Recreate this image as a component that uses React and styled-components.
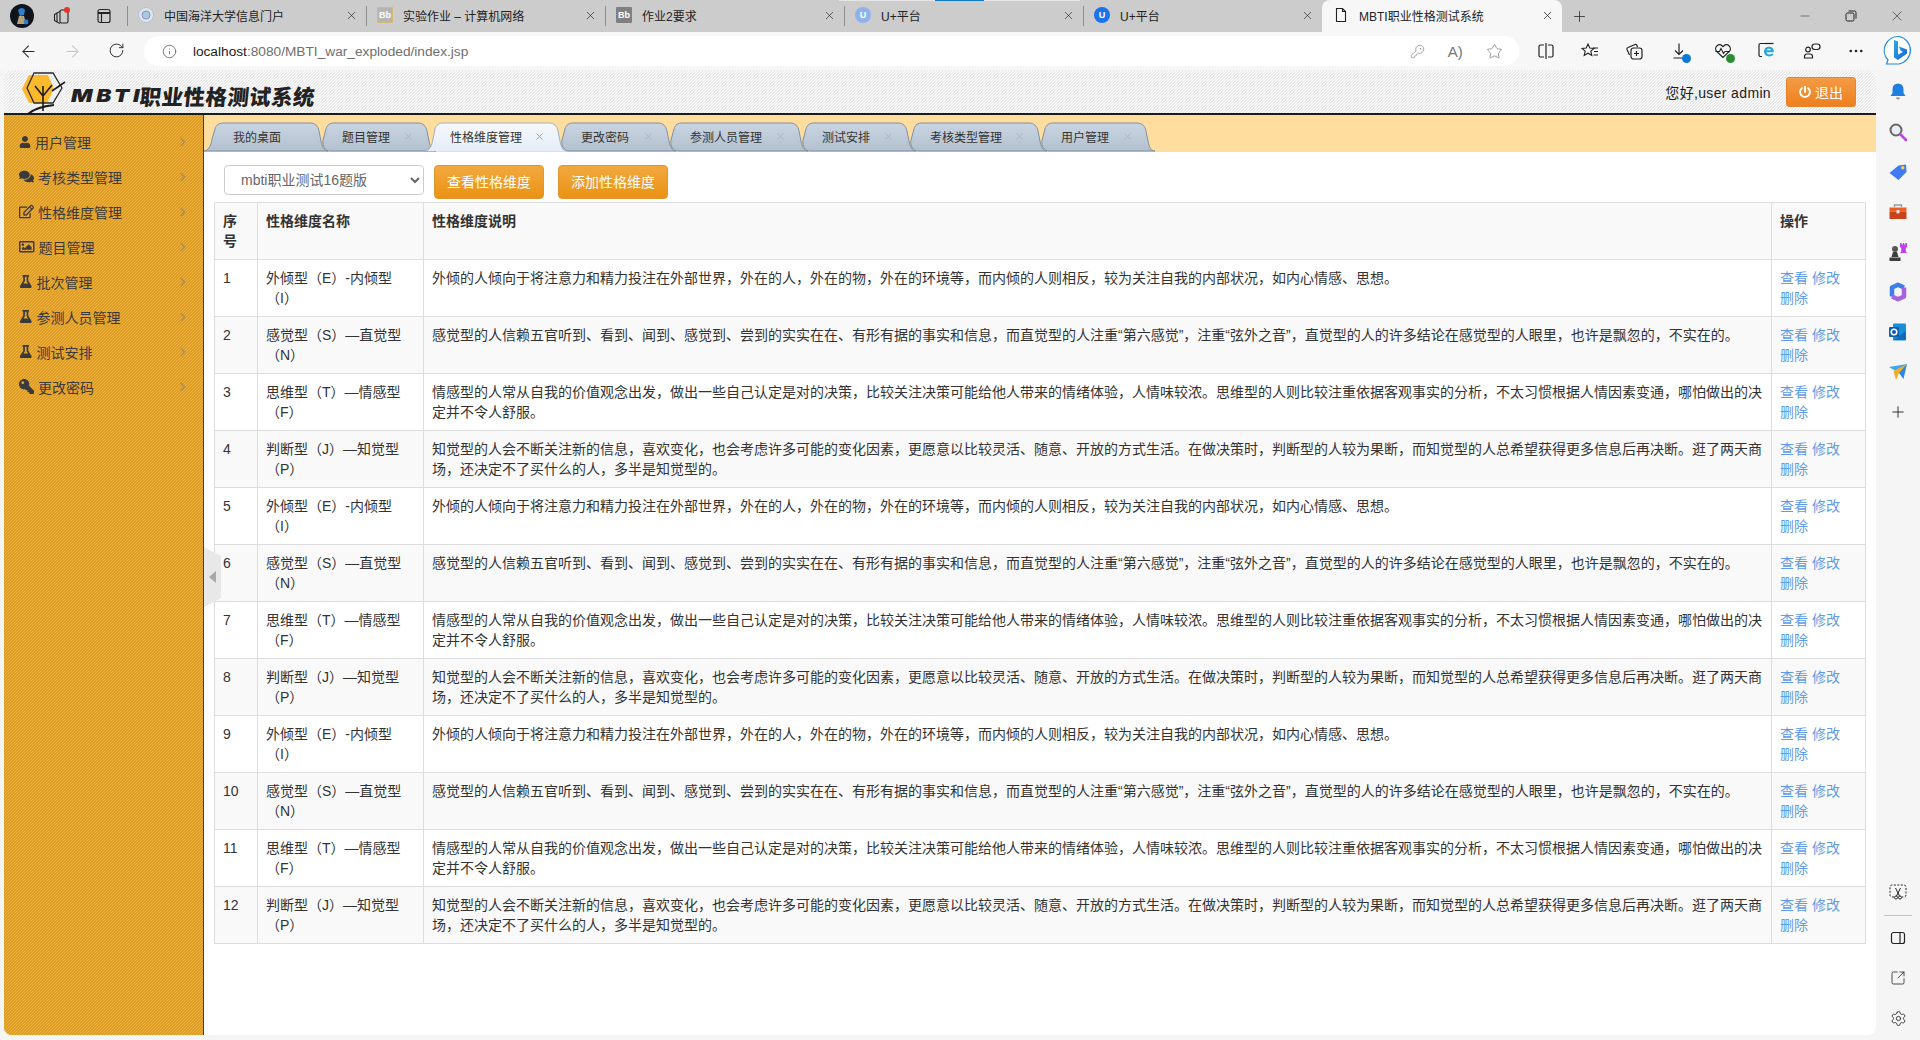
import React from "react";
import styled, { createGlobalStyle } from "styled-components";
import {
  ArrowLeft,
  ArrowRight,
  RotateCw,
  Info,
  KeyRound,
  Star,
  Plus,
  Minus,
  X,
  MoreHorizontal,
  Settings,
  SquareArrowOutUpRight,
} from "lucide-react";
import {
  FaUser,
  FaComments,
  FaRegEdit,
  FaRegImage,
  FaFlask,
  FaKey,
  FaChevronRight,
  FaPowerOff,
} from "react-icons/fa";

const FONT = `"Liberation Sans", "Noto Sans CJK SC", sans-serif`;

const GlobalStyle = createGlobalStyle`
  html, body {
    margin: 0;
    padding: 0;
    overflow: hidden;
    background: #f5f5f5;
  }
  * {
    box-sizing: border-box;
  }
`;

const hatch = (a, b) => `
  background-color: ${a};
  background-image: linear-gradient(135deg, ${b} 25%, ${a} 25%, ${a} 50%, ${b} 50%, ${b} 75%, ${a} 75%);
  background-size: 3px 3px;
`;

const Window = styled.div`
  width: 1920px;
  height: 1040px;
  display: flex;
  flex-direction: column;
  overflow: hidden;
  background: #f5f5f5;
  font-family: ${FONT};
  font-size: 14px;
  color: #333;
`;

/* browser tab strip */
const TabBar = styled.div`
  height: 32px;
  display: flex;
  align-items: stretch;
  background: #cccccc;
  flex: none;
`;

const TabBarLeft = styled.div`
  width: 127px;
  display: flex;
  align-items: center;
  padding-left: 10px;
`;

const TabBarIcon = styled.div`
  width: 20px;
  height: 20px;
  display: flex;
  align-items: center;
  justify-content: center;
  margin-left: ${(p) => p.$left}px;
`;

const BrowserTab = styled.div`
  position: relative;
  width: ${(p) => (p.$active ? 240 : 239)}px;
  display: flex;
  align-items: center;
  gap: 10px;
  padding: 0 8px 2px 11px;
  font-size: 12px;
  color: #222;
  background: ${(p) => (p.$active ? "#f7f7f7" : "transparent")};
  border-radius: ${(p) => (p.$active ? "8px 8px 0 0" : "0")};

  &::before {
    content: "";
    display: ${(p) => (p.$active ? "none" : "block")};
    position: absolute;
    left: 0;
    top: 6px;
    height: 20px;
    width: 1px;
    background: #8f8f8f;
  }
`;

const LoadStrip = styled.div`
  position: absolute;
  left: -5px;
  top: 0;
  width: 241px;
  height: 1px;
  background: linear-gradient(90deg, #e6e6e6 40%, #0f78d4 40%, #0f78d4 60%, #e6e6e6 60%);
`;

const TabTitle = styled.span`
  flex: 1;
  white-space: nowrap;
  overflow: hidden;
`;

const Favicon = styled.span`
  width: 16px;
  height: 16px;
  flex: none;
  display: flex;
  align-items: center;
  justify-content: center;
  font-size: 9px;
  font-weight: bold;
  color: ${(p) => p.$color || "#fff"};
  background: ${(p) => p.$bg || "transparent"};
  border-radius: ${(p) => (p.$round ? "50%" : "1px")};
  border: ${(p) => (p.$edge ? `1px solid ${p.$edge}` : "none")};
`;

const NewTab = styled.div`
  width: 34px;
  display: flex;
  align-items: center;
  justify-content: center;
`;

const WindowControls = styled.div`
  margin-left: auto;
  display: flex;
  align-items: center;
`;

const WindowButton = styled.div`
  width: 46px;
  height: 32px;
  display: flex;
  align-items: center;
  justify-content: center;
`;

/* address row */
const Toolbar = styled.div`
  height: 38px;
  flex: none;
  display: flex;
  align-items: center;
  background: #f7f7f7;
`;

const NavButton = styled.div`
  width: 44px;
  display: flex;
  justify-content: center;
  color: ${(p) => (p.$off ? "#c4c4c4" : "#222")};
`;

const NavGroup = styled.div`
  width: 144px;
  display: flex;
  padding-left: 6px;
`;

const AddressBar = styled.div`
  width: 1376px;
  height: 30px;
  display: flex;
  align-items: center;
  background: #fff;
  border-radius: 15px;
  padding: 0 16px 0 18px;
`;

const Url = styled.div`
  margin-left: 16px;
  font-size: 13.7px;
  color: #6f6f6f;

  b {
    font-weight: normal;
    color: #1c1c1c;
  }
`;

const AddressIcons = styled.div`
  margin-left: auto;
  display: flex;
  gap: 23px;
  color: #8a8a8a;
  align-items: center;
`;

const ReadText = styled.span`
  font-size: 15px;
  line-height: 1;
  color: #777;
`;

const ToolIcons = styled.div`
  display: flex;
  align-items: center;
  padding-left: 5px;
`;

const ToolIcon = styled.div`
  position: relative;
  width: 44.3px;
  height: 24px;
  display: flex;
  align-items: center;
  justify-content: center;
  color: #222;
`;

const Badge = styled.span`
  position: absolute;
  right: 10px;
  bottom: 0;
  width: 9px;
  height: 9px;
  border-radius: 50%;
  background: ${(p) => p.$color};
`;

const BingWrap = styled.div`
  width: 42px;
  display: flex;
  justify-content: center;
`;

/* page + edge panel */
const Body = styled.div`
  flex: 1;
  min-height: 0;
  display: flex;
`;

const Page = styled.div`
  width: 1872px;
  height: 965px;
  margin-left: 4px;
  display: flex;
  flex-direction: column;
  background: #fff;
  border-radius: 8px;
  overflow: hidden;
`;

const Header = styled.header`
  height: 45px;
  flex: none;
  display: flex;
  align-items: center;
  padding: 0 20px 0 12px;
  border-bottom: 2px solid #1c1c1c;
  ${hatch("#ffffff", "#ebebeb")}
`;

const LogoText = styled.div`
  display: flex;
  align-items: center;
  margin-left: 5px;
  margin-top: 9px;
  line-height: 24px;
  color: #222;
  white-space: nowrap;
`;

const LogoLatin = styled.span`
  width: 69px;
  font-family: Inter, "Liberation Sans", sans-serif;
  font-weight: 900;
  font-style: italic;
  font-size: 18px;
  letter-spacing: 3px;
  transform: scaleX(1.25);
  transform-origin: left center;
`;

const LogoHan = styled.span`
  display: inline-block;
  font-family: "Noto Sans CJK SC", sans-serif;
  font-weight: 900;
  font-size: 21.5px;
  letter-spacing: 0.4px;
  transform: skewX(-6deg);
`;

const Greeting = styled.div`
  margin-left: auto;
  letter-spacing: 0.35px;
  color: #1c1c1c;
`;

const LogoutButton = styled.button`
  width: 70px;
  height: 30px;
  margin-left: 15px;
  display: flex;
  align-items: center;
  justify-content: center;
  gap: 4px;
  font: inherit;
  color: #fff;
  border: 1px solid #e9852c;
  border-radius: 3px;
  background: linear-gradient(#f39b45, #ee801f);
`;

const Columns = styled.div`
  flex: 1;
  min-height: 0;
  display: flex;
`;

const Sidebar = styled.nav`
  width: 200px;
  flex: none;
  padding-top: 10px;
  border-right: 1px solid #3d3d3d;
  ${hatch("#f0b339", "#dd9c27")}
`;

const MenuItem = styled.div`
  height: 35px;
  display: flex;
  align-items: center;
  gap: 4px;
  padding: 0 15px 2px;
  color: #3a3a3a;
`;

const MenuIcon = styled.span`
  flex: none;
  display: flex;
  width: ${(p) => p.$size}px;
  font-size: ${(p) => p.$size}px;
  transform: ${(p) => (p.$flip ? "scaleX(-1)" : "none")};
`;

const MenuChevron = styled(FaChevronRight)`
  margin-left: auto;
  font-size: 10px;
  color: #ab9059;
`;

const Main = styled.div`
  position: relative;
  flex: 1;
  min-width: 0;
`;

const CollapseHandle = styled.div`
  position: absolute;
  left: 0;
  top: 432px;
  width: 17px;
  height: 60px;
  display: flex;
  align-items: center;
  padding-left: 5px;
  background: #e8e8e8;
  clip-path: polygon(0 0, 100% 15%, 100% 85%, 0 100%);

  &::before {
    content: "";
    border-style: solid;
    border-width: 6.5px 7px 6.5px 0;
    border-color: transparent #a8a8a8 transparent transparent;
  }
`;

const TabStrip = styled.div`
  height: 37px;
  display: flex;
  padding-top: 8px;
  background: #ffdd9f;
`;

const PageTab = styled.div`
  position: relative;
  z-index: ${(p) => (p.$active ? 20 : p.$order)};
  height: 28px;
  flex: none;
  width: ${(p) => p.$width}px;
  display: flex;
  align-items: center;
  padding: 0 0 2px ${(p) => p.$pad}px;
  font-size: 12px;
  color: #333;
`;

const TabLabel = styled.span`
  position: relative;
`;

const TabShape = styled.svg`
  position: absolute;
  left: 0;
  top: 0;
  overflow: visible;
`;

const TabClose = styled(X)`
  position: absolute;
  right: 16px;
  top: 8px;
  color: ${(p) => (p.$active ? "#999" : "#aab4bf")};
`;

const Content = styled.div`
  padding: 13px 10px 0;
`;

const Controls = styled.div`
  display: flex;
  align-items: flex-start;
  padding-left: 10px;
  margin-bottom: 3px;
`;

const BankSelect = styled.select`
  width: 200px;
  height: 30px;
  padding: 0 12px;
  margin-right: 10px;
  font: inherit;
  color: #666;
  background: #fff;
  border: 1px solid #ccc;
  border-radius: 4px;
`;

const OrangeButton = styled.button`
  height: 34px;
  padding: 4px 12px 7px;
  margin-right: 14px;
  font: inherit;
  color: #fff;
  border: 1px solid #e2952c;
  border-radius: 4px;
  background: linear-gradient(#f2a83f, #ea9214);
`;

const Table = styled.table`
  width: 1651px;
  table-layout: fixed;
  border-collapse: collapse;
  line-height: 20px;
`;

const HeadCell = styled.th`
  padding: 8px;
  text-align: left;
  vertical-align: top;
  font-weight: bold;
  color: #333;
  background: #f9f9f9;
  border: 1px solid #ddd;
`;

const Row = styled.tr`
  background: ${(p) => (p.$even ? "#f9f9f9" : "#fff")};
`;

const Cell = styled.td`
  padding: 8px;
  vertical-align: top;
  border: 1px solid #ddd;
`;

const ActionLink = styled.a`
  color: #5f9bea;
  text-decoration: none;
`;

const EdgePanel = styled.aside`
  flex: 1;
  display: flex;
  flex-direction: column;
  align-items: center;
  padding: 2px 0;
`;

const EdgeIcon = styled.div`
  width: 44px;
  height: 40px;
  flex: none;
  display: flex;
  align-items: center;
  justify-content: center;
  color: #222;
`;

const EdgeBottom = styled.div`
  margin-top: auto;
  display: flex;
  flex-direction: column;
  align-items: center;
`;

const EdgeRule = styled.div`
  width: 28px;
  height: 1px;
  margin: 3px 0 2px;
  background: #c4c4c4;
`;

const Avatar = () => (
  <svg width="24" height="24" viewBox="0 0 24 24">
    <circle cx="12" cy="12" r="12" fill="#10141c" />
    <path d="M8 6q4-4 7 0l-1 5-4 1z" fill="#2c7fd0" />
    <path d="M9 12h5l2 8H7z" fill="#b9a47a" />
    <circle cx="16" cy="18" r="2.4" fill="#2c7fd0" />
  </svg>
);

const WorkspaceIcon = () => (
  <svg width="20" height="20" viewBox="0 0 20 20" fill="none" stroke="#222" strokeWidth="1.1">
    <rect x="8" y="4" width="8" height="13" rx="1.5" />
    <path d="M8 5.5 5 7v9l3 1.5M5 7 2.5 8.5v6L5 16" />
    <circle cx="15" cy="4" r="3" fill="#e5342c" stroke="none" />
  </svg>
);

const VerticalTabsIcon = () => (
  <svg width="16" height="16" viewBox="0 0 16 16" fill="none" stroke="#222" strokeWidth="1.2">
    <rect x="2" y="1.5" width="12" height="13" rx="2" />
    <path d="M2 5h12" strokeWidth="2" />
    <path d="M5.500 5v9.500" />
  </svg>
);

const SealIcon = () => (
  <svg width="16" height="16" viewBox="0 0 16 16">
    <circle cx="8" cy="8" r="7.5" fill="#dfe5ee" stroke="#b4bfd6" />
    <circle cx="8" cy="8" r="4" fill="#a8c8de" stroke="#8a94c0" />
  </svg>
);

const SplitIcon = () => (
  <svg width="18" height="18" viewBox="0 0 18 18" fill="none" stroke="#222" strokeWidth="1.2">
    <path d="M7 3H3.500A1.500 1.500 0 0 0 2 4.500v9A1.500 1.500 0 0 0 3.500 15H7M11 3h3.500A1.500 1.500 0 0 1 16 4.500v9a1.500 1.500 0 0 1-1.500 1.500H11M9 1v16" />
  </svg>
);

const FavoritesIcon = () => (
  <svg width="18" height="18" viewBox="0 0 18 18" fill="none" stroke="#222" strokeWidth="1.1">
    <path d="M7 2l1.800 4 4.200.4-3.200 2.800 1 4.200L7 11.200 3.200 13.400l1-4.200L1 6.400 5.200 6z" />
    <path d="M12 6h5M13 9.500h4M12.500 13h4.500" />
  </svg>
);

const CollectionsIcon = () => (
  <svg width="18" height="18" viewBox="0 0 18 18" fill="none" stroke="#222" strokeWidth="1.2">
    <rect x="6" y="6" width="11" height="11" rx="2.500" />
    <path d="M11.500 9v5M9 11.500h5M4.500 13 2 7.500Q1.500 6 3 5.500L10 2.500Q11.500 2 12 3.500L12.500 5" />
  </svg>
);

const DownloadIcon = () => (
  <svg width="18" height="18" viewBox="0 0 18 18" fill="none" stroke="#222" strokeWidth="1.2">
    <path d="M9 1.500V12M5 8.500 9 12.500l4-4M3.500 16h9" />
  </svg>
);

const HeartIcon = () => (
  <svg width="18" height="18" viewBox="0 0 18 18" fill="none" stroke="#222" strokeWidth="1.1">
    <path d="M9 15.500 2.800 9.500a3.700 3.700 0 0 1 0-5.500 4 4 0 0 1 5.500 0L9 4.700l.7-.7a4 4 0 0 1 5.500 0 3.700 3.700 0 0 1 0 5.500z" />
    <path d="M1.500 9.500h4l1.500-3 2.500 5 1.500-2h5" />
  </svg>
);

const IeIcon = () => (
  <svg width="20" height="20" viewBox="0 0 20 20" fill="none">
    <path d="M8 2.500H3.500A1.500 1.500 0 0 0 2 4v10a1.500 1.500 0 0 0 1.500 1.500H5" stroke="#222" strokeWidth="1.2" />
    <path d="M8 2.500h8.500" stroke="#222" strokeWidth="1.2" />
    <path d="M7 10.500a5 5 0 0 1 9.700-1.500v2.300H9.500c.3 2.500 3.500 3 5.800 1l1 1.800c-3.600 2.700-9.300 1.200-9.300-3.600zM9.600 9.300h4.600c-.4-2-4-2-4.600 0z" fill="#23a6e8" />
  </svg>
);

const PeopleIcon = () => (
  <svg width="18" height="18" viewBox="0 0 18 18" fill="none" stroke="#222" strokeWidth="1.2">
    <circle cx="5" cy="7.500" r="2.300" />
    <path d="M1.500 16v-1.500A2.500 2.500 0 0 1 4 12h3a2.500 2.500 0 0 1 2.500 2.500V16z" />
    <rect x="9" y="2" width="8" height="5.500" rx="2.700" />
  </svg>
);

const BingIcon = () => (
  <svg width="32" height="32" viewBox="0 0 32 32">
    <defs>
      <linearGradient id="bingFill" x1="0" y1="0" x2="1" y2="1">
        <stop offset="0" stopColor="#2fa8f0" />
        <stop offset="1" stopColor="#1763d8" />
      </linearGradient>
    </defs>
    <path d="M16 1.500a14 14 0 0 1 0 27.500H3.500l1.500-4A14 14 0 0 1 16 1.500z" fill="#fff" stroke="#1e88e5" strokeWidth="1.2" />
    <path d="M11 5l4 1.500v13l5-2.500-2.500-1.500-1.500-4 8 3v4L15 25l-4-2.500z" fill="url(#bingFill)" />
  </svg>
);

const BellIcon = () => (
  <svg width="20" height="20" viewBox="0 0 20 20">
    <path d="M10 1.500a5.500 5.500 0 0 1 5.500 5.500v4l2 3h-15l2-3V7A5.500 5.500 0 0 1 10 1.500z" fill="#1f7fe0" />
    <path d="M8 15.500h4a2 2 0 0 1-4 0z" fill="#8a8f96" />
  </svg>
);

const FindIcon = () => (
  <svg width="20" height="20" viewBox="0 0 20 20" fill="none">
    <circle cx="8" cy="8" r="5.500" fill="#e8eef4" stroke="#666" strokeWidth="2" />
    <path d="M12.500 12.500l5.500 5.500" stroke="#c23ff0" strokeWidth="2.600" strokeLinecap="round" />
  </svg>
);

const TagIcon = () => (
  <svg width="20" height="20" viewBox="0 0 20 20">
    <path d="M1.500 11 10.500 3.500 18 2.500l.5 7.500-8 8z" fill="#3f7bf2" />
    <circle cx="14.800" cy="5.700" r="1.700" fill="#ffd13c" />
  </svg>
);

const ToolboxIcon = () => (
  <svg width="20" height="20" viewBox="0 0 20 20">
    <path d="M6.500 5V3h7v2" fill="none" stroke="#9a9a9a" strokeWidth="1.400" />
    <path d="M1.500 5.500h17v4h-17z" fill="#e85f28" />
    <path d="M1.500 9.500h17v7.500h-17z" fill="#c8431a" />
    <rect x="8.500" y="8" width="3" height="3.400" fill="#e4e4e4" />
  </svg>
);

const ChessIcon = () => (
  <svg width="20" height="20" viewBox="0 0 20 20">
    <path d="M12 1h1.600v1.500h1.200V1h1.400v1.500h1.200V1H19v4l-1.200 1v3.500L19 11h-7l1.200-1.500V6L12 5z" fill="#c23ff0" />
    <circle cx="7" cy="7" r="3" fill="#555" />
    <path d="M5 10h4l1.500 5H3.500zM1.500 15.500h11V19h-11z" fill="#3c3c3c" />
  </svg>
);

const CopilotIcon = () => (
  <svg width="20" height="20" viewBox="0 0 20 20" fill="none" strokeWidth="4.500">
    <path d="M16 5.500 10 2.800 4 5.500v9" stroke="#3d7fe6" strokeLinejoin="round" />
    <path d="M4 14.500 10 17.200l6-2.700v-9" stroke="#a563dd" strokeLinejoin="round" />
  </svg>
);

const OutlookIcon = () => (
  <svg width="20" height="20" viewBox="0 0 20 20">
    <rect x="5" y="1.500" width="13" height="17" rx="1" fill="#1a8fd8" />
    <path d="M18 9v9H6z" fill="#0f6cbd" />
    <rect x="1" y="5" width="10" height="10" rx="1" fill="#0b5fae" />
    <circle cx="6" cy="10" r="2.800" fill="none" stroke="#fff" strokeWidth="1.500" />
  </svg>
);

const SendIcon = () => (
  <svg width="20" height="20" viewBox="0 0 20 20">
    <path d="M1 5 19 2 11 11z" fill="#3aa9ee" />
    <path d="M19 2 11 11 8 18 5.500 9z" fill="#f3ad24" />
    <path d="M11 11 15.500 17 19 2z" fill="#2f86dc" />
  </svg>
);

const CutIcon = () => (
  <svg width="18" height="18" viewBox="0 0 18 18" fill="none" stroke="#222" strokeWidth="1">
    <path d="M5 14H3a2 2 0 0 1-2-2V4a2 2 0 0 1 2-2h12a2 2 0 0 1 2 2v8a2 2 0 0 1-2 2h-2" strokeDasharray="2 1.500" />
    <path d="M6.500 5 10.500 13M11.500 5 7.500 13" />
    <circle cx="7" cy="14.500" r="1.500" />
    <circle cx="11" cy="14.500" r="1.500" />
  </svg>
);

const SidebarToggleIcon = () => (
  <svg width="16" height="16" viewBox="0 0 16 16" fill="none" stroke="#222" strokeWidth="1.200">
    <rect x="1.500" y="2.500" width="13" height="11" rx="2" />
    <path d="M10 2.500v11" />
  </svg>
);

const Logo = () => (
  <svg width="50" height="44" viewBox="0 0 50 44" fill="none">
    <path d="M6 19 13 5h19l6 14-7 14H13z" fill="#fdb92c" />
    <path d="M11 18 18 3h19l9 15-9 15H18z" stroke="#2b2b2b" strokeWidth="1.300" />
    <path d="M27 41V16M27 26l-8-10M27 26l9-11M36 21l13-9" stroke="#1c1c1c" strokeWidth="1.600" />
    <path d="M12 44q8-7 26-9" stroke="#1c1c1c" strokeWidth="2.200" />
  </svg>
);

const browserTabs = [
  { title: "中国海洋大学信息门户", icon: <SealIcon /> },
  {
    title: "实验作业 – 计算机网络",
    icon: <Favicon $bg="#b5b5b5" $edge="#d8b877" $color="#fff">Bb</Favicon>,
  },
  { title: "作业2要求", icon: <Favicon $bg="#808080">Bb</Favicon> },
  { title: "U+平台", icon: <Favicon $bg="#8fb2ec" $round>U</Favicon>, loading: true },
  { title: "U+平台", icon: <Favicon $bg="#1a73e8" $round>U</Favicon> },
];

const menu = [
  { label: "用户管理", Icon: FaUser, size: 12 },
  { label: "考核类型管理", Icon: FaComments, size: 15 },
  { label: "性格维度管理", Icon: FaRegEdit, size: 15 },
  { label: "题目管理", Icon: FaRegImage, size: 15.5 },
  { label: "批次管理", Icon: FaFlask, size: 13.5 },
  { label: "参测人员管理", Icon: FaFlask, size: 13.5 },
  { label: "测试安排", Icon: FaFlask, size: 13.5 },
  { label: "更改密码", Icon: FaKey, size: 15, flip: true },
];

const pageTabs = [
  { label: "我的桌面", width: 118, pad: 29, shape: "first" },
  { label: "题目管理", width: 108, pad: 20 },
  { label: "性格维度管理", width: 131, pad: 20, active: true },
  { label: "更改密码", width: 109, pad: 20 },
  { label: "参测人员管理", width: 132, pad: 20 },
  { label: "测试安排", width: 108, pad: 20 },
  { label: "考核类型管理", width: 131, pad: 20 },
  { label: "用户管理", width: 108, pad: 20 },
];

const dimensions = [
  {
    name: "外倾型（E）-内倾型（I）",
    text: "外倾的人倾向于将注意力和精力投注在外部世界，外在的人，外在的物，外在的环境等，而内倾的人则相反，较为关注自我的内部状况，如内心情感、思想。",
  },
  {
    name: "感觉型（S）—直觉型（N）",
    text: "感觉型的人信赖五官听到、看到、闻到、感觉到、尝到的实实在在、有形有据的事实和信息，而直觉型的人注重“第六感觉”，注重“弦外之音”，直觉型的人的许多结论在感觉型的人眼里，也许是飘忽的，不实在的。",
  },
  {
    name: "思维型（T）—情感型（F）",
    text: "情感型的人常从自我的价值观念出发，做出一些自己认定是对的决策，比较关注决策可能给他人带来的情绪体验，人情味较浓。思维型的人则比较注重依据客观事实的分析，不太习惯根据人情因素变通，哪怕做出的决定并不令人舒服。",
  },
  {
    name: "判断型（J）—知觉型（P）",
    text: "知觉型的人会不断关注新的信息，喜欢变化，也会考虑许多可能的变化因素，更愿意以比较灵活、随意、开放的方式生活。在做决策时，判断型的人较为果断，而知觉型的人总希望获得更多信息后再决断。逛了两天商场，还决定不了买什么的人，多半是知觉型的。",
  },
];

const rows = Array.from({ length: 12 }, (_, i) => ({ id: i + 1, ...dimensions[i % 4] }));

// outline of a page tab: left side depends on the kind of tab, right side always flares under the next one
function tabPath(w, tab) {
  const h = 28;
  let left = `M8,${h} C3,${h} 0,${h - 5} 1,${h - 11} L4,6 C5,2 8,0 12,0`;
  if (tab.shape === "first") {
    left = `M0,${h} C4,${h} 7,${h - 5} 8,${h - 12} L11,6 C12,2 15,0 19,0`;
  }
  if (tab.active) {
    left = `M-6,${h} C0,${h} 2,${h - 6} 3,${h - 12} L5,6 C6,2 9,0 13,0`;
  }
  const right = `L${w - 12},0 C${w - 7},0 ${w - 4},3 ${w - 3},8 L${w - 1},${h - 10} C${w},${h - 4} ${w + 2},${h} ${w + 6},${h}`;
  return `${left} ${right}${tab.active ? "" : " Z"}`;
}

function PageTabItem({ tab, order }) {
  return (
    <PageTab $width={tab.width} $pad={tab.pad} $active={tab.active} $order={order}>
      <TabShape width={tab.width} height="28">
        <defs>
          <linearGradient id="tabIdle" x1="0" y1="0" x2="0" y2="1">
            <stop offset="0" stopColor="#c9d5e2" />
            <stop offset="1" stopColor="#b3c0ce" />
          </linearGradient>
          <linearGradient id="tabOn" x1="0" y1="0" x2="0" y2="1">
            <stop offset="0" stopColor="#f6f9fc" />
            <stop offset="1" stopColor="#e4edf7" />
          </linearGradient>
        </defs>
        <path
          d={tabPath(tab.width, tab)}
          fill={tab.active ? "url(#tabOn)" : "url(#tabIdle)"}
          stroke={tab.active ? "#9fb0c2" : "#7f90a4"}
          strokeWidth="1"
        />
      </TabShape>
      <TabLabel>{tab.label}</TabLabel>
      {tab.shape !== "first" && <TabClose size={11} strokeWidth={2} $active={tab.active} />}
    </PageTab>
  );
}

export default function App() {
  return (
    <Window>
      <GlobalStyle />
      <TabBar>
        <TabBarLeft>
          <Avatar />
          <TabBarIcon $left={18}><WorkspaceIcon /></TabBarIcon>
          <TabBarIcon $left={22}><VerticalTabsIcon /></TabBarIcon>
        </TabBarLeft>
        {browserTabs.map((tab, i) => (
          <BrowserTab key={i}>
            {tab.loading && <LoadStrip />}
            {tab.icon}
            <TabTitle>{tab.title}</TabTitle>
            <X size={13} strokeWidth={1.2} />
          </BrowserTab>
        ))}
        <BrowserTab $active>
          <svg width="16" height="16" viewBox="0 0 16 16" fill="none" stroke="#222" strokeWidth="1.100">
            <path d="M3.500 1.500h6l3 3v10h-9z" />
            <path d="M9.500 1.500v3h3" />
          </svg>
          <TabTitle>MBTI职业性格测试系统</TabTitle>
          <X size={13} strokeWidth={1.4} />
        </BrowserTab>
        <NewTab><Plus size={17} strokeWidth={1.2} /></NewTab>
        <WindowControls>
          <WindowButton><Minus size={14} strokeWidth={1} /></WindowButton>
          <WindowButton>
            <svg width="12" height="12" viewBox="0 0 12 12" fill="none" stroke="#222" strokeWidth="1">
              <rect x="1" y="3" width="8" height="8" rx="1.500" />
              <path d="M3.500 1h6A1.500 1.500 0 0 1 11 2.500v6" />
            </svg>
          </WindowButton>
          <WindowButton><X size={16} strokeWidth={1} /></WindowButton>
        </WindowControls>
      </TabBar>

      <Toolbar>
        <NavGroup>
          <NavButton><ArrowLeft size={19} strokeWidth={1.3} /></NavButton>
          <NavButton $off><ArrowRight size={19} strokeWidth={1.3} /></NavButton>
          <NavButton><RotateCw size={17} strokeWidth={1.3} /></NavButton>
        </NavGroup>
        <AddressBar>
          <Info size={15} strokeWidth={1.2} color="#555" />
          <Url><b>localhost</b>:8080/MBTI_war_exploded/index.jsp</Url>
          <AddressIcons>
            <KeyRound size={15} strokeWidth={1.2} />
            <ReadText>A)</ReadText>
            <Star size={17} strokeWidth={1.2} />
          </AddressIcons>
        </AddressBar>
        <ToolIcons>
          <ToolIcon><SplitIcon /></ToolIcon>
          <ToolIcon><FavoritesIcon /></ToolIcon>
          <ToolIcon><CollectionsIcon /></ToolIcon>
          <ToolIcon><DownloadIcon /><Badge $color="#0f78d4" /></ToolIcon>
          <ToolIcon><HeartIcon /><Badge $color="#2e8b35" /></ToolIcon>
          <ToolIcon><IeIcon /></ToolIcon>
          <ToolIcon><PeopleIcon /></ToolIcon>
          <ToolIcon><MoreHorizontal size={18} strokeWidth={1.6} /></ToolIcon>
        </ToolIcons>
        <BingWrap><BingIcon /></BingWrap>
      </Toolbar>

      <Body>
        <Page>
          <Header>
            <Logo />
            <LogoText>
              <LogoLatin>MBTI</LogoLatin>
              <LogoHan>职业性格测试系统</LogoHan>
            </LogoText>
            <Greeting>您好,user admin</Greeting>
            <LogoutButton><FaPowerOff size={12} />退出</LogoutButton>
          </Header>
          <Columns>
            <Sidebar>
              {menu.map(({ label, Icon, size, flip }) => (
                <MenuItem key={label}>
                  <MenuIcon $size={size} $flip={flip}><Icon /></MenuIcon>
                  {label}
                  <MenuChevron />
                </MenuItem>
              ))}
            </Sidebar>
            <Main>
              <TabStrip>
                {pageTabs.map((tab, i) => (
                  <PageTabItem key={tab.label} tab={tab} order={i + 1} />
                ))}
              </TabStrip>
              <Content>
                <Controls>
                  <BankSelect defaultValue="16">
                    <option value="16">mbti职业测试16题版</option>
                  </BankSelect>
                  <OrangeButton>查看性格维度</OrangeButton>
                  <OrangeButton>添加性格维度</OrangeButton>
                </Controls>
                <Table>
                  <colgroup>
                    <col width="43" />
                    <col width="166" />
                    <col width="1348" />
                    <col width="94" />
                  </colgroup>
                  <thead>
                    <tr>
                      <HeadCell>序号</HeadCell>
                      <HeadCell>性格维度名称</HeadCell>
                      <HeadCell>性格维度说明</HeadCell>
                      <HeadCell>操作</HeadCell>
                    </tr>
                  </thead>
                  <tbody>
                    {rows.map((row, i) => (
                      <Row key={row.id} $even={i % 2 === 1}>
                        <Cell>{row.id}</Cell>
                        <Cell>{row.name}</Cell>
                        <Cell>{row.text}</Cell>
                        <Cell>
                          <ActionLink href="#">查看</ActionLink>{" "}
                          <ActionLink href="#">修改</ActionLink>{" "}
                          <ActionLink href="#">删除</ActionLink>
                        </Cell>
                      </Row>
                    ))}
                  </tbody>
                </Table>
              </Content>
              <CollapseHandle />
            </Main>
          </Columns>
        </Page>
        <EdgePanel>
          <EdgeIcon><BellIcon /></EdgeIcon>
          <EdgeIcon><FindIcon /></EdgeIcon>
          <EdgeIcon><TagIcon /></EdgeIcon>
          <EdgeIcon><ToolboxIcon /></EdgeIcon>
          <EdgeIcon><ChessIcon /></EdgeIcon>
          <EdgeIcon><CopilotIcon /></EdgeIcon>
          <EdgeIcon><OutlookIcon /></EdgeIcon>
          <EdgeIcon><SendIcon /></EdgeIcon>
          <EdgeIcon><Plus size={18} strokeWidth={1.2} /></EdgeIcon>
          <EdgeBottom>
            <EdgeIcon><CutIcon /></EdgeIcon>
            <EdgeRule />
            <EdgeIcon><SidebarToggleIcon /></EdgeIcon>
            <EdgeIcon><SquareArrowOutUpRight size={16} strokeWidth={1.2} /></EdgeIcon>
            <EdgeIcon><Settings size={17} strokeWidth={1.2} /></EdgeIcon>
          </EdgeBottom>
        </EdgePanel>
      </Body>
    </Window>
  );
}
